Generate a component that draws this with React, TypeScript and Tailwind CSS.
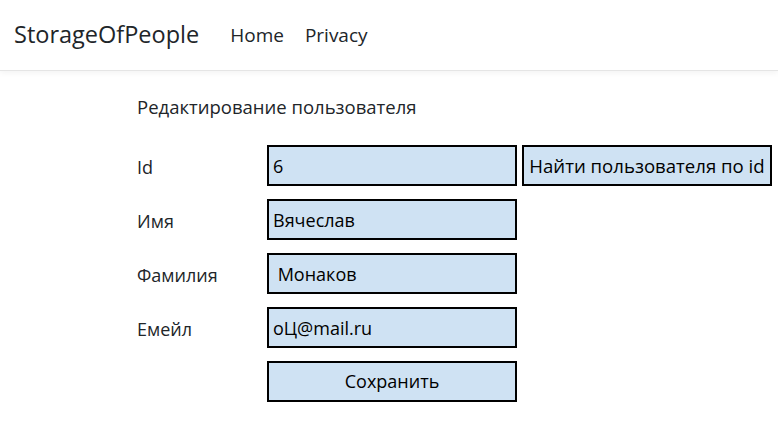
import React from "react";

const inputCls =
  "w-[250px] h-[41px] border-2 border-black bg-[#cfe2f3] px-[4px] text-[18px] text-black outline-none";
const labelCls = "w-[130px] text-[18px] pt-[3px]";

export default function App() {
  return (
    <div className="min-h-[429px] bg-white text-[#212529]" style={{ fontFamily: '"Open Sans", "Noto Sans", sans-serif' }}>
      <header className="h-[71px] border-b border-[#e5e5e5] shadow-[0_2px_6px_rgba(0,0,0,0.05)] flex items-center px-[14px]">
        <span className="text-[23.5px] text-[#212529] mr-[31px]">StorageOfPeople</span>
        <nav className="flex gap-[21px] text-[19px]">
          <a className="text-[#212529]">Home</a>
          <a className="text-[#212529]">Privacy</a>
        </nav>
      </header>
      <main className="pl-[137px] pt-[23px]">
        <h1 className="text-[18.5px] leading-[26px] mb-[25px]">Редактирование пользователя</h1>
        <div className="flex flex-col gap-[13px]">
          <div className="flex items-center">
            <label className={labelCls}>Id</label>
            <input className={inputCls} defaultValue="6" />
            <button className="ml-[5px] w-[250px] h-[41px] border-2 border-black bg-[#cfe2f3] text-[18.6px] text-black">
              Найти пользователя по id
            </button>
          </div>
          <div className="flex items-center">
            <label className={labelCls}>Имя</label>
            <input className={inputCls} defaultValue="Вячеслав" />
          </div>
          <div className="flex items-center">
            <label className={labelCls}>Фамилия</label>
            <input className={inputCls} defaultValue=" Монаков" />
          </div>
          <div className="flex items-center">
            <label className={labelCls}>Емейл</label>
            <input className={inputCls} defaultValue="oЦ@mail.ru" />
          </div>
          <div className="flex items-center">
            <div className="w-[130px]" />
            <button className="w-[250px] h-[41px] border-2 border-black bg-[#cfe2f3] text-[18px] text-black">
              Сохранить
            </button>
          </div>
        </div>
      </main>
    </div>
  );
}
